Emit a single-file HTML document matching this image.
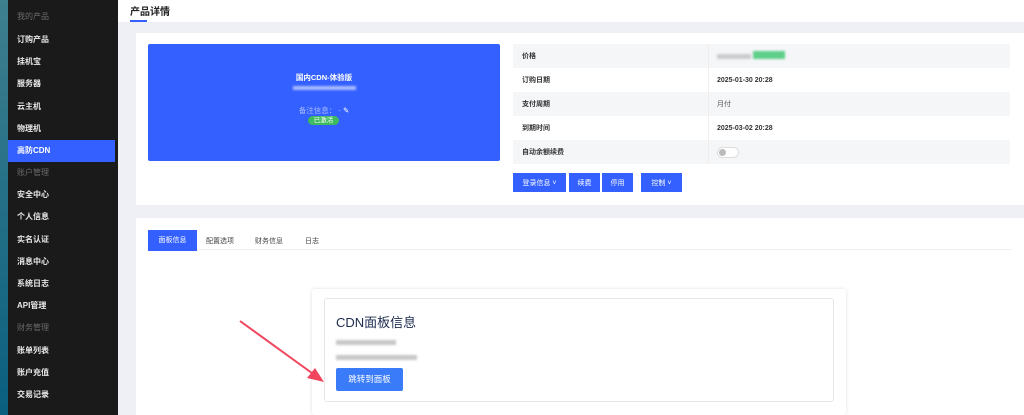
<!DOCTYPE html>
<html><head><meta charset="utf-8"><style>
*{margin:0;padding:0;box-sizing:border-box}
body{width:1024px;height:415px;overflow:hidden;position:relative;background:#eef0f6;font-family:"Liberation Sans","Noto Sans CJK SC",sans-serif;font-size:8px;color:#333}
.strip{position:absolute;left:0;top:0;width:8px;height:415px;background:linear-gradient(#3e7f8e,#0a5f7f)}
.side{position:absolute;left:8px;top:0;width:110px;height:415px;background:#1a1a1a}
.side div{position:absolute;left:9px;font-size:8px;color:#e8e8e8;font-weight:bold;line-height:10px}
.side div.g{color:#6a6a6a;font-weight:normal}
.side .act{position:absolute;left:0;top:140px;width:107px;height:22px;background:#3360ff}
.hdr{position:absolute;left:118px;top:0;width:906px;height:22px;background:#fff}
.hdr span{position:absolute;left:12px;top:3px;font-size:10px;font-weight:bold;color:#222}
.hdr i{position:absolute;left:12px;top:20px;width:17px;height:2px;background:#3360ff}
.card{position:absolute;background:#fff}
.blue{position:absolute;left:148px;top:44px;width:352px;height:117px;background:#3360ff;border-radius:2px;color:#fff;text-align:center}
.tbl{position:absolute;left:513px;top:44px;width:497px}
.tbl .r{height:24px;display:flex;align-items:center;font-size:7px;font-weight:bold;color:#333}
.tbl .r:nth-child(odd){background:#f5f6f8}
.tbl .r .k{width:196px;padding-left:9px;height:100%;display:flex;align-items:center;border-right:1px solid #eee}
.tbl .r .v{padding-left:8px}
.btn{position:absolute;top:173px;height:19px;background:#3360ff;color:#fff;font-size:7px;display:flex;align-items:center;justify-content:center}
.blur{display:inline-block;background:#ccc;filter:blur(1px);height:5px}
</style></head><body>
<div class="strip"></div>
<div class="side">
<div class="act"></div>
<div class="g" style="top:12px">我的产品</div>
<div style="top:35px">订购产品</div>
<div style="top:57px">挂机宝</div>
<div style="top:79px">服务器</div>
<div style="top:102px">云主机</div>
<div style="top:124px">物理机</div>
<div style="top:146px;color:#fff">高防CDN</div>
<div class="g" style="top:168px">账户管理</div>
<div style="top:190px">安全中心</div>
<div style="top:212px">个人信息</div>
<div style="top:235px">实名认证</div>
<div style="top:257px">消息中心</div>
<div style="top:279px">系统日志</div>
<div style="top:301px">API管理</div>
<div class="g" style="top:323px">财务管理</div>
<div style="top:346px">账单列表</div>
<div style="top:368px">账户充值</div>
<div style="top:390px">交易记录</div>
</div>
<div class="hdr"><span>产品详情</span><i></i></div>
<div class="card" style="left:136px;top:33px;width:888px;height:172px"></div>
<div class="blue">
<div style="position:absolute;top:71px;width:100%;top:71px"></div>
<div style="position:absolute;top:71px;left:0;width:100%;top:71px"></div>
<div style="position:absolute;left:0;width:100%;top:72px;font-size:7.5px;font-weight:bold;top:72px"></div>
<div style="position:absolute;left:0;width:100%;top:28px;font-size:7.5px;font-weight:bold">国内CDN-体验版</div>
<div style="position:absolute;left:145px;top:42px;width:63px;height:4px;background:#a9bcff;filter:blur(1px)"></div>
<div style="position:absolute;left:0;width:100%;top:61px;font-size:7.5px;color:#a9bcff">备注信息： - <span style="color:#fff">✎</span></div>
<div style="position:absolute;left:160px;top:72px;width:31px;height:9px;background:#3dbb5e;border-radius:5px;font-size:6.5px;line-height:9px">已激活</div>
</div>
<div class="tbl">
<div class="r"><div class="k">价格</div><div class="v"><span class="blur" style="width:34px;background:#ccc"></span> <span class="blur" style="width:32px;height:8px;background:#5fcf8a"></span></div></div>
<div class="r"><div class="k">订购日期</div><div class="v">2025-01-30 20:28</div></div>
<div class="r"><div class="k">支付周期</div><div class="v" style="font-weight:normal;color:#555">月付</div></div>
<div class="r"><div class="k">到期时间</div><div class="v">2025-03-02 20:28</div></div>
<div class="r"><div class="k">自动余额续费</div><div class="v"><span style="display:inline-block;width:22px;height:11px;border:1px solid #ddd;border-radius:6px;background:#fff;position:relative;vertical-align:middle"><span style="position:absolute;left:1px;top:1px;width:7px;height:7px;border-radius:50%;background:#bbb"></span></span></div></div>
</div>
<div class="btn" style="left:513px;width:53px">登录信息 ˅</div>
<div class="btn" style="left:569px;width:31px">续费</div>
<div class="btn" style="left:602px;width:31px">停用</div>
<div class="btn" style="left:641px;width:41px">控制 ˅</div>
<div class="card" style="left:136px;top:218px;width:888px;height:197px"></div>
<div style="position:absolute;left:148px;top:249px;width:864px;height:1px;background:#f0f0f0"></div>
<div style="position:absolute;left:148px;top:230px;width:49px;height:21px;background:#3360ff;color:#fff;font-size:7px;line-height:21px;text-align:center">面板信息</div>
<div style="position:absolute;left:206px;top:236px;font-size:7px;color:#444">配置选项</div>
<div style="position:absolute;left:255px;top:236px;font-size:7px;color:#444">财务信息</div>
<div style="position:absolute;left:305px;top:236px;font-size:7px;color:#444">日志</div>
<div style="position:absolute;left:312px;top:289px;width:534px;height:126px;background:#fff;box-shadow:0 0 4px rgba(0,0,0,.12);border-radius:3px"></div>
<div style="position:absolute;left:324px;top:298px;width:510px;height:104px;border:1px solid #e6e6e6;border-radius:3px"></div>
<div style="position:absolute;left:336px;top:312px;font-size:13px;color:#1d2b4f">CDN面板信息</div>
<div style="position:absolute;left:336px;top:340px;width:60px;height:5px;background:#c8c8c8;filter:blur(1px)"></div>
<div style="position:absolute;left:336px;top:355px;width:81px;height:5px;background:#c8c8c8;filter:blur(1px)"></div>
<div style="position:absolute;left:336px;top:368px;width:67px;height:23px;background:#3a7bfa;border-radius:2px;color:#fff;font-size:8.5px;line-height:23px;text-align:center">跳转到面板</div>
<svg style="position:absolute;left:0;top:0" width="1024" height="415"><line x1="240" y1="321" x2="316" y2="376" stroke="#f0455d" stroke-width="2"/><polygon points="324,382 307,378 315,368" fill="#f0455d"/></svg>
</body></html>
